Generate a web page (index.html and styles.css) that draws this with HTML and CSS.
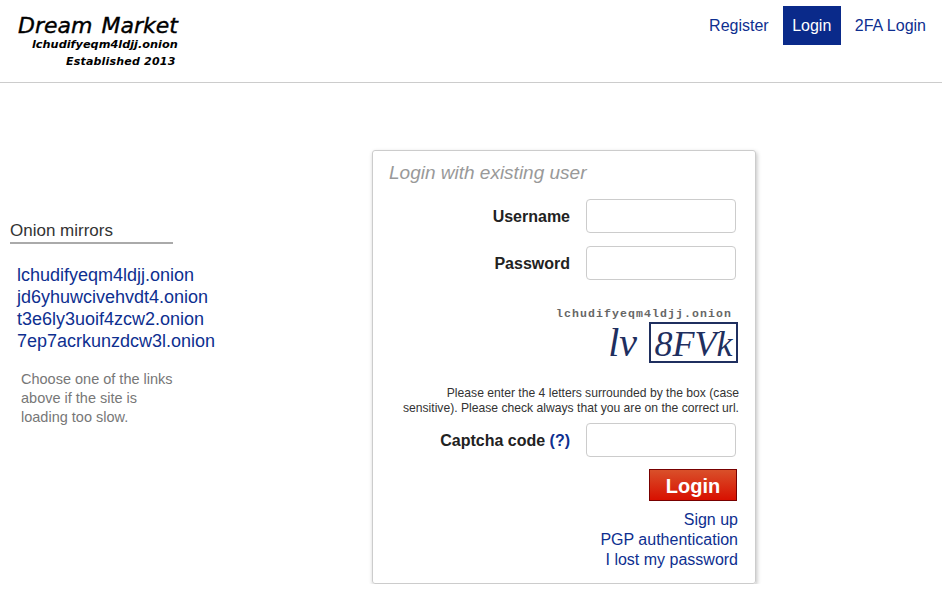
FILE: index.html
```html
<!DOCTYPE html>
<html lang="en">
<head>
	<meta charset="UTF-8">
	<title>Dream Market</title>
	<link rel="stylesheet" href="styles.css">
</head>
<body>
<div class="header">
	<div class="logo">
		<div class="logo-name">Dream Market</div>
		<div class="logo-url">lchudifyeqm4ldjj.onion</div>
		<div class="logo-est">Established 2013</div>
	</div>
	<ul class="nav">
		<li><a href="#">Register</a></li>
		<li><a class="active" href="#">Login</a></li>
		<li><a href="#">2FA Login</a></li>
	</ul>
</div>
<div class="main">
	<div class="side">
		<div class="side-title">Onion mirrors</div>
		<ul class="mirrors">
			<li><a href="#">lchudifyeqm4ldjj.onion</a></li>
			<li><a href="#">jd6yhuwcivehvdt4.onion</a></li>
			<li><a href="#">t3e6ly3uoif4zcw2.onion</a></li>
			<li><a href="#">7ep7acrkunzdcw3l.onion</a></li>
		</ul>
		<p class="side-note">Choose one of the links above if the site is loading too slow.</p>
	</div>
	<div class="card">
		<div class="card-title">Login with existing user</div>
		<div class="row">
			<label class="label">Username</label>
			<input class="field" type="text">
		</div>
		<div class="row">
			<label class="label">Password</label>
			<input class="field" type="password">
		</div>
		<div class="captcha">
			<div class="captcha-url">lchudifyeqm4ldjj.onion</div>
			<div class="captcha-img">
				<span class="captcha-free">lv</span>
				<span class="captcha-box">8FVk</span>
			</div>
		</div>
		<p class="captcha-note">Please enter the 4 letters surrounded by the box (case sensitive). Please check always that you are on the correct url.</p>
		<div class="row row-code">
			<label class="label">Captcha code <a href="#">(?)</a></label>
			<input class="field" type="text">
		</div>
		<div class="actions">
			<button class="btn" type="button">Login</button>
		</div>
		<div class="links">
			<a href="#">Sign up</a>
			<a href="#">PGP authentication</a>
			<a href="#">I lost my password</a>
		</div>
	</div>
</div>
</body>
</html>
```

FILE: styles.css
```css
* {
	padding: 0;
	margin: 0;
	box-sizing: border-box;
}

li {
	list-style: none;
}

a {
	color: #0e2f90;
	text-decoration: none;
}

body {
	background-color: #fff;
	font-family: "Liberation Sans", Arial, sans-serif;
	color: #222;
}

.header {
	height: 83px;
	border-bottom: 1px solid #ccc;
	display: flex;
	justify-content: space-between;
	align-items: flex-start;
}

.logo {
	padding: 11px 0 0 18px;
	width: 200px;
	font-family: "DejaVu Sans", sans-serif;
	font-style: italic;
	color: #000;
}

.logo-name {
	font-size: 22px;
	line-height: 30px;
	word-spacing: 2px;
	white-space: nowrap;
	-webkit-text-stroke: 0.4px #000;
}

.logo-url {
	font-size: 11.3px;
	line-height: 14px;
	font-weight: bold;
	padding-left: 14px;
	margin-top: -3px;
	white-space: nowrap;
}

.logo-est {
	font-size: 11px;
	line-height: 14px;
	font-weight: bold;
	padding-left: 48px;
	margin-top: 3px;
	letter-spacing: 0.2px;
	white-space: nowrap;
}

.nav {
	display: flex;
	gap: 14px;
	padding: 6px 16px 0 0;
}

.nav a {
	display: block;
	height: 39px;
	line-height: 39px;
	font-size: 16px;
}

.nav a.active {
	padding: 0 9.5px;
	background-color: #0a2a8a;
	color: #fff;
}

.main {
	display: flex;
	align-items: flex-start;
	padding-top: 67px;
}

.side {
	width: 372px;
	padding: 69px 0 0 10px;
}

.side-title {
	width: 163px;
	height: 25px;
	border-bottom: 2px solid #aaa;
	font-size: 17px;
	line-height: 24px;
	color: #333;
}

.mirrors {
	padding: 20px 0 0 7px;
}

.mirrors li {
	font-size: 18px;
	line-height: 22px;
	white-space: nowrap;
}

.side-note {
	width: 162px;
	margin: 18px 0 0 11px;
	font-size: 14.5px;
	line-height: 19px;
	color: #777;
}

.card {
	width: 384px;
	height: 434px;
	border: 1px solid #ccc;
	border-radius: 3px;
	box-shadow: 1px 2px 4px rgba(0, 0, 0, .25);
	padding: 10px 19px 0 16px;
}

.card-title {
	font-size: 19px;
	line-height: 24px;
	font-style: italic;
	color: #999;
	margin-bottom: 14px;
}

.row {
	display: flex;
	justify-content: flex-end;
	align-items: center;
	gap: 16px;
	margin-bottom: 13px;
}

.label {
	padding-top: 2px;
	font-size: 16px;
	font-weight: bold;
}

.field {
	width: 150px;
	height: 34px;
	border: 1px solid #ccc;
	border-radius: 4px;
	background-color: #fff;
}

.captcha {
	width: 190px;
	margin: 27px -2px 0 auto;
	text-align: right;
}

.captcha-url {
	padding-right: 6px;
	font-family: "Liberation Mono", monospace;
	font-size: 11.5px;
	line-height: 14px;
	font-weight: bold;
	letter-spacing: 1.1px;
	color: #666;
	white-space: nowrap;
}

.captcha-img {
	display: flex;
	justify-content: flex-end;
	align-items: center;
	gap: 12px;
	margin-top: 1px;
	font-family: "Liberation Serif", serif;
	font-style: italic;
	color: #1f2f5f;
}

.captcha-free {
	font-size: 40px;
	line-height: 40px;
}

.captcha-box {
	width: 89px;
	height: 41px;
	border: 2px solid #1f2f5f;
	font-size: 36px;
	line-height: 40px;
	text-align: center;
	white-space: nowrap;
}

.captcha-note {
	width: 340px;
	margin: 23px -3px 0 auto;
	font-size: 12.15px;
	line-height: 15px;
	text-align: right;
	color: #333;
}

.row-code {
	margin-top: 7px;
	margin-bottom: 12px;
}

.actions {
	display: flex;
	justify-content: flex-end;
	margin-right: -1px;
}

.btn {
	width: 88px;
	height: 32px;
	padding-top: 3px;
	border: 1px solid #700;
	background: linear-gradient(#d9502a, #d81000);
	color: #fff;
	font-family: "Liberation Sans", Arial, sans-serif;
	font-size: 20px;
	font-weight: bold;
}

.links {
	margin: 9px -2px 0 0;
	text-align: right;
	font-size: 16px;
	line-height: 20px;
}

.links a {
	display: block;
}
```
